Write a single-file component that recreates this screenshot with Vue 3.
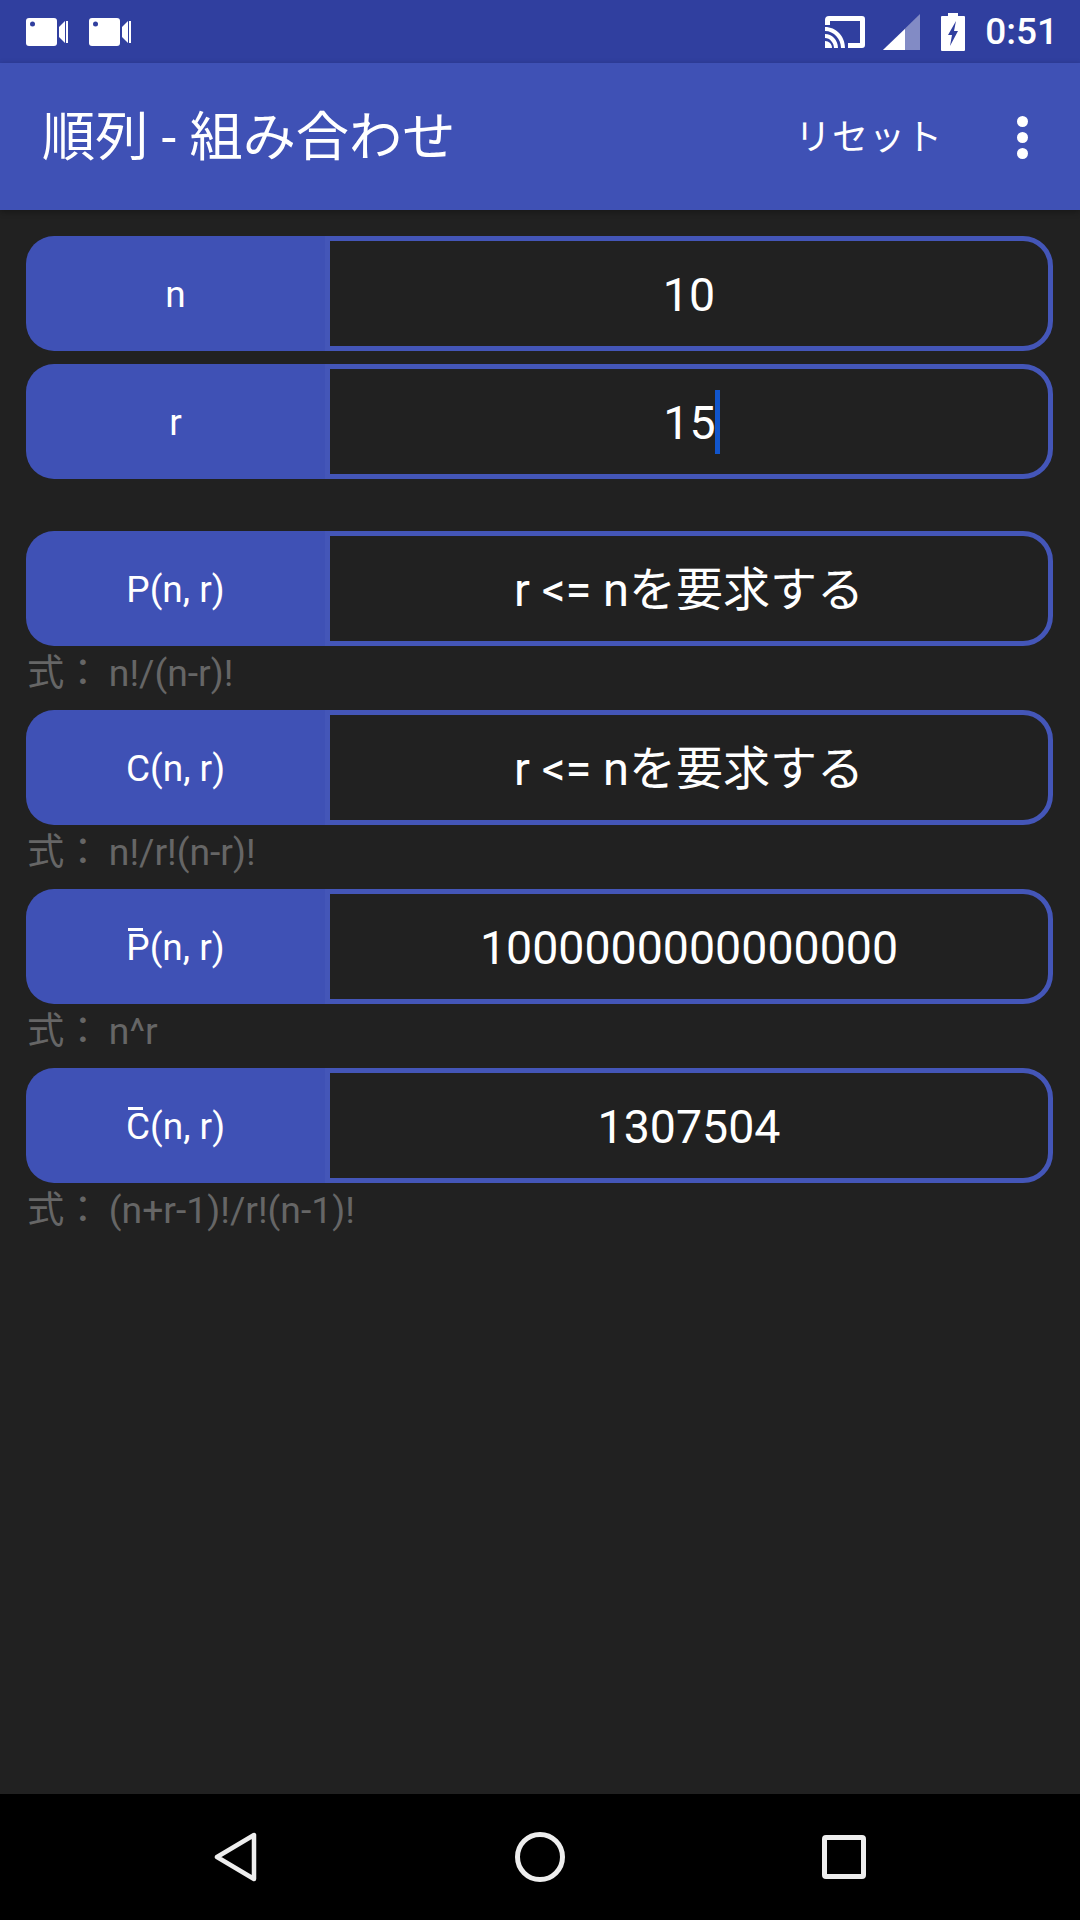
<template>
  <div class="screen">
    <header class="status-bar">
      <div class="status-left">
        <svg v-for="n in 2" :key="n" class="camera" viewBox="0 0 42 30">
          <path d="M3 1h25a3 3 0 0 1 3 3v22a3 3 0 0 1-3 3H3a3 3 0 0 1-3-3V4a3 3 0 0 1 3-3z" fill="#fff" />
          <circle cx="6.5" cy="7" r="2.5" fill="#303f9f" />
          <path d="M33 10l6-6v22l-6-6z" fill="#fff" />
          <path d="M40 4h2v22h-2z" fill="#fff" />
        </svg>
      </div>
      <div class="status-right">
        <svg class="cast" viewBox="0 0 42 34">
          <path d="M1 10V5a4 4 0 0 1 4-4h33a3 3 0 0 1 3 3v26a3 3 0 0 1-3 3H24v-5h12V6H6v4z" fill="#fff" />
          <path d="M1 12c11 0 20 9 20 21h-4c0-9-7-17-16-17zM1 19c7 0 13 6 13 14h-4c0-5-4-10-9-10z" fill="#fff" />
          <path d="M1 26c4 0 7 3 7 7H1z" fill="#fff" />
        </svg>
        <svg class="signal" viewBox="0 0 37 36">
          <path d="M37 0v36H0z" fill="#fff" fill-opacity="0.4" />
          <path d="M22 15v21H0z" fill="#fff" />
        </svg>
        <svg class="battery" viewBox="0 0 24 38">
          <path d="M7 0h10v3h6a1 1 0 0 1 1 1v33a1 1 0 0 1-1 1H1a1 1 0 0 1-1-1V4a1 1 0 0 1 1-1h6z" fill="#fff" />
          <path d="M15 8l-8 14h4l-2 11 8-15h-4l2-10z" fill="#303f9f" />
        </svg>
        <span class="clock">0:51</span>
      </div>
    </header>

    <nav class="app-bar">
      <h1 class="title">順列 - 組み合わせ</h1>
      <span class="reset">リセット</span>
      <span class="menu"><i></i><i></i><i></i></span>
    </nav>

    <main class="content">
      <section class="inputs">
        <div class="row">
          <div class="row-label">n</div>
          <div class="row-value">10</div>
        </div>
        <div class="row">
          <div class="row-label">r</div>
          <div class="row-value">15<span class="caret"></span></div>
        </div>
      </section>

      <section v-for="item in results" :key="item.value + item.formula" class="result">
        <div class="row">
          <div class="row-label">
            <span class="letter" :class="{ bar: item.bar }">{{ item.letter }}</span>(n, r)
          </div>
          <div class="row-value" :class="{ notice: !item.bar }">{{ item.value }}</div>
        </div>
        <p class="formula">式： {{ item.formula }}</p>
      </section>
    </main>

    <footer class="nav-bar">
      <svg class="nav-back" viewBox="0 0 44 50">
        <path d="M40 3v44L3 25z" fill="none" stroke="#eee" stroke-width="4.5" stroke-linejoin="round" />
      </svg>
      <svg class="nav-home" viewBox="0 0 50 50">
        <circle cx="25" cy="25" r="22.5" fill="none" stroke="#eee" stroke-width="5" />
      </svg>
      <svg class="nav-recent" viewBox="0 0 44 44">
        <rect x="2.5" y="2.5" width="39" height="39" rx="1.5" fill="none" stroke="#eee" stroke-width="5" />
      </svg>
    </footer>
  </div>
</template>

<script setup>
const results = [
  { letter: "P", value: "r <= nを要求する", formula: "n!/(n-r)!" },
  { letter: "C", value: "r <= nを要求する", formula: "n!/r!(n-r)!" },
  { letter: "P", bar: true, value: "1000000000000000", formula: "n^r" },
  { letter: "C", bar: true, value: "1307504", formula: "(n+r-1)!/r!(n-1)!" },
];
</script>

<style scoped>
.screen {
  display: flex;
  flex-direction: column;
  width: 1080px;
  height: 1920px;
  overflow: hidden;
  background: #212121;
  color: #fff;
  font-family: Roboto, "Noto Sans CJK JP", sans-serif;
}

.status-bar {
  display: flex;
  align-items: center;
  justify-content: space-between;
  flex-shrink: 0;
  height: 63px;
  padding: 0 22px 0 26px;
  box-sizing: border-box;
  background: #303f9f;
}

.status-left {
  display: flex;
  gap: 21px;
}

.camera {
  width: 42px;
  height: 30px;
}

.status-right {
  display: flex;
  align-items: center;
}

.cast {
  width: 42px;
  height: 34px;
  margin-right: 17px;
}

.signal {
  width: 37px;
  height: 36px;
  margin-right: 21px;
}

.battery {
  width: 24px;
  height: 38px;
  margin-right: 20px;
}

.clock {
  font-size: 37px;
  font-weight: 500;
  line-height: 1;
}

.app-bar {
  position: relative;
  z-index: 1;
  display: flex;
  align-items: center;
  flex-shrink: 0;
  height: 147px;
  padding: 0 52px 0 42px;
  box-sizing: border-box;
  background: #3f51b5;
  box-shadow: 0 2px 6px rgba(0, 0, 0, 0.3);
}

.title {
  flex: 1;
  margin: 0;
  padding-top: 5px;
  font-size: 53.2px;
  font-weight: 400;
  line-height: 1;
}

.reset {
  margin-right: 74px;
  padding-bottom: 5px;
  font-size: 36px;
  letter-spacing: 1px;
}

.menu {
  display: flex;
  flex-direction: column;
  gap: 5px;
  padding-top: 2px;
}

.menu i {
  width: 11px;
  height: 11px;
  border-radius: 50%;
  background: #fff;
}

.content {
  flex: 1;
  padding: 26px 27px 0 26px;
}

.inputs {
  display: flex;
  flex-direction: column;
  gap: 13px;
  margin-bottom: 52px;
}

.row {
  display: grid;
  grid-template-columns: 299px 1fr;
  height: 115px;
}

.row-label {
  display: flex;
  align-items: center;
  justify-content: center;
  padding-top: 2px;
  border-radius: 28px 0 0 28px;
  background: #3f51b5;
  font-size: 37px;
}

.letter {
  position: relative;
}

.letter.bar::before {
  content: "";
  position: absolute;
  top: 2px;
  left: 2px;
  width: 15px;
  height: 3px;
  background: #fff;
}

.row-value {
  display: flex;
  align-items: center;
  justify-content: center;
  padding-top: 2px;
  box-sizing: border-box;
  border: 5px solid #4456b8;
  border-radius: 0 30px 30px 0;
  font-size: 46.5px;
  line-height: 56px;
}

.row-value.notice {
  font-size: 47px;
}

.caret {
  width: 5px;
  height: 64px;
  margin-right: -5px;
  margin-left: -1px;
  margin-top: -2px;
  background: #1155cc;
}

.formula {
  height: 64px;
  margin: 0;
  padding-left: 1px;
  color: #666;
  font-size: 37.3px;
  line-height: 54px;
  word-spacing: -2px;
}

.nav-bar {
  display: flex;
  align-items: center;
  justify-content: space-between;
  flex-shrink: 0;
  height: 126px;
  padding: 0 214px;
  box-sizing: border-box;
  background: #000;
}

.nav-back {
  width: 44px;
  height: 50px;
}

.nav-home {
  width: 50px;
  height: 50px;
}

.nav-recent {
  width: 44px;
  height: 44px;
}
</style>

<style>
body {
  background: #212121;
}
</style>
